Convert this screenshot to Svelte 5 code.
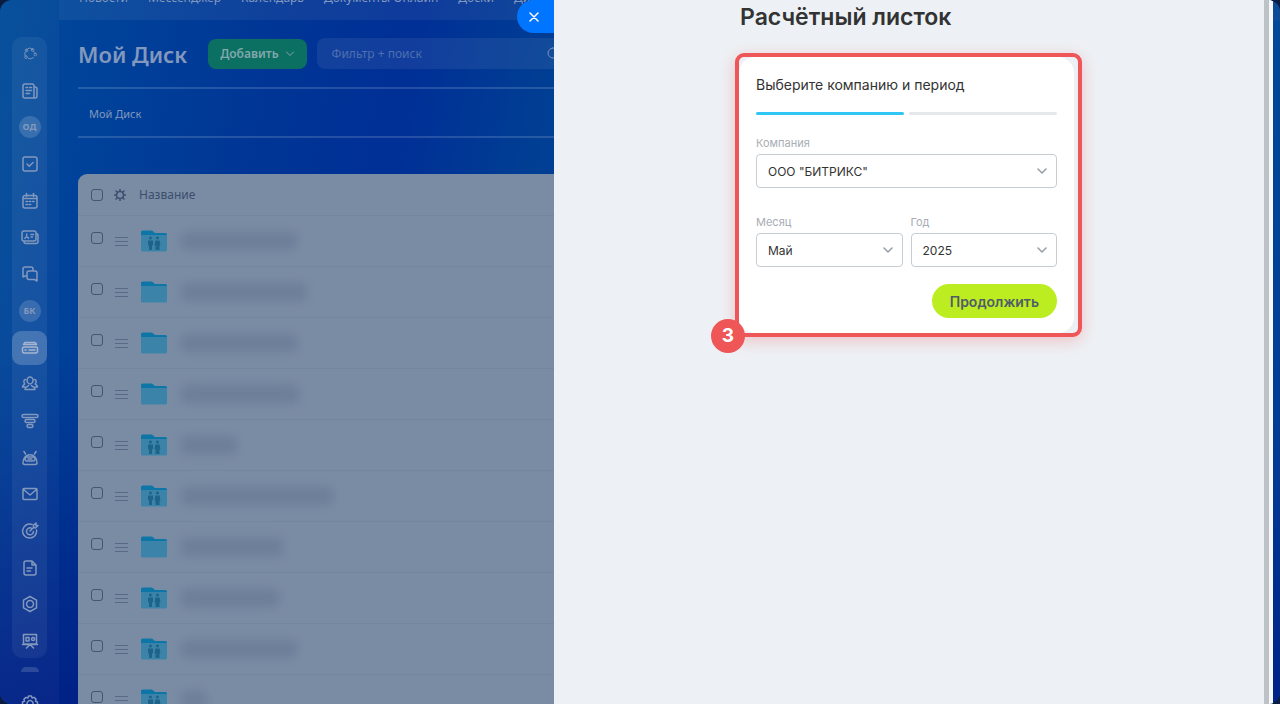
<script>
	let company = 'bitrix';
	let month = 'may';
	let year = '2025';

	const topMenu = ['Новости', 'Мессенджер', 'Календарь', 'Документы Онлайн', 'Доски', 'Диск'];

	const sidebar = [
		{ title: 'Копилот', thin: true, d: 'M5 5a4 4 0 0 1 7-1M13 6.500a4 4 0 0 1 1.500 2M13 13a5 5 0 0 1-6 1M3.500 11a4 4 0 0 1 0-4M5 3.500a1.500 1.500 0 1 0 .1 3a1.500 1.500 0 1 0-.1-3M12 3a1.500 1.500 0 1 0 .1 3a1.500 1.500 0 1 0-.1-3M15 8a1.500 1.500 0 1 0 .1 3a1.500 1.500 0 1 0-.1-3M4.500 11a1.500 1.500 0 1 0 .1 3a1.500 1.500 0 1 0-.1-3' },
		{ title: 'Новости', d: 'M4 2h7a2 2 0 0 1 2 2v12H4a2 2 0 0 1-2-2V4a2 2 0 0 1 2-2M13 5h1a2 2 0 0 1 2 2v7a2 2 0 0 1-2 2h-2M5 5.500h1.500M8.500 5.500h2M5 8.500h5.500M5 11.500h3.500' },
		{ title: 'Общие документы', letters: 'ОД' },
		{ title: 'Задачи', d: 'M4 2h10a2 2 0 0 1 2 2v10a2 2 0 0 1-2 2H4a2 2 0 0 1-2-2V4a2 2 0 0 1 2-2M6 9l2.200 2.200L12 7.500' },
		{ title: 'Календарь', d: 'M4 3.500h10a2 2 0 0 1 2 2V14a2 2 0 0 1-2 2H4a2 2 0 0 1-2-2V5.500a2 2 0 0 1 2-2M5.500 1.500v3M12.500 1.500v3M2 6.500h14M5 9.500h1.500M8.200 9.500h1.500M11.500 9.500H13M5 12.500h1.500M8.200 12.500h1.500' },
		{ title: 'Контакты', d: 'M3 3h10a2 2 0 0 1 2 2v6a2 2 0 0 1-2 2H3a2 2 0 0 1-2-2V5a2 2 0 0 1 2-2M15 5.500a2 2 0 0 1 2 2V13a2 2 0 0 1-2 2.500H5a2 2 0 0 1-2-2M4 10.500c0-2 3.500-2 3.500 0M5.700 6v1.500M10 6.500h2.500M10 9h1.500' },
		{ title: 'Чат', d: 'M6 11H4l-2 1V4a2 2 0 0 1 2-2h6a2 2 0 0 1 2 2v1M8 6h6a2 2 0 0 1 2 2v8l-2.500-1.500H8a2 2 0 0 1-2-2V8a2 2 0 0 1 2-2' },
		{ title: 'База контактов', letters: 'БК' },
		{ title: 'Диск', active: true, d: 'M4 3.500h10l1.500 2h-13zM3 8h12a1.500 1.500 0 0 1 1.500 1.500v3A1.500 1.500 0 0 1 15 14H3a1.500 1.500 0 0 1-1.500-1.500v-3A1.500 1.500 0 0 1 3 8M4 11h1M8 11h6' },
		{ title: 'Группы', d: 'M9 2a3 3.500 0 1 0 .1 0M4 14.500c0-3 3-2.500 3.500-4M14 14.500c0-3-3-2.500-3.500-4M4 14.500h10M4.500 4.500c-2 0-2 3-.8 4.500C3 10 1.500 10 1.500 12H4M13.500 4.500c2 0 2 3 .8 4.500.7 1 2.200 1 2.200 3H14' },
		{ title: 'Воронка', d: 'M2.500 2.500h13a1 1 0 0 1 0 3h-13a1 1 0 0 1 0-3M5.500 7.500h7a1 1 0 0 1 0 3h-7a1 1 0 0 1 0-3M7.500 12.500h3a1 1 0 0 1 0 3h-3a1 1 0 0 1 0-3' },
		{ title: 'Роботы', d: 'M2 14c0-11 14-11 14 0 0 1-1 1.500-2 1.500H4c-1 0-2-.5-2-1.500M4.500 5L3 2.500M13.500 5L15 2.500M6 8h6a2 2 0 0 1 0 4H6a2 2 0 0 1 0-4M7 10h4' },
		{ title: 'Почта', d: 'M3 3.500h12a1 1 0 0 1 1 1v9a1 1 0 0 1-1 1H3a1 1 0 0 1-1-1v-9a1 1 0 0 1 1-1M2.500 4.500L9 10l6.500-5.500' },
		{ title: 'Цели', d: 'M11 2.500A7 7 0 1 0 15.500 8M10 6a3.500 3.500 0 1 0 2.500 3.500M9 9l4-4M12.500 5.500V3L15 1v2.500h2L14.500 6z' },
		{ title: 'Документы', d: 'M5 2h6l4 4v8a2 2 0 0 1-2 2H5a2 2 0 0 1-2-2V4a2 2 0 0 1 2-2M11 2v4h4M6 9h5M6 12h3.500' },
		{ title: 'Маркет', d: 'M9 1.500l6.500 3.700v7.600L9 16.500l-6.500-3.700V5.200zM9 5.500a3.500 3.500 0 1 0 .1 0' },
		{ title: 'Доски', d: 'M2.500 2.500h13v9.500h-13zM1.500 12.500h15M5.500 16L9 12.500l3.500 3.500M5 5.500h3v3.500H5zM12 5.500a1.500 1.500 0 1 0 .1 0' }
	];

	// width of the hidden file name, px
	const files = [
		{ shared: true, width: 116 },
		{ shared: false, width: 126 },
		{ shared: false, width: 116 },
		{ shared: false, width: 118 },
		{ shared: true, width: 56 },
		{ shared: true, width: 152 },
		{ shared: false, width: 102 },
		{ shared: true, width: 98 },
		{ shared: true, width: 116 },
		{ shared: true, width: 26 }
	];
</script>

<div class="app">
	<div class="desk">
		<aside class="sidebar">
			<nav class="side-menu" aria-label="Разделы">
				{#each sidebar as item}
					<a href="#top" class="side-item" class:active={item.active} aria-label={item.title}>
						{#if item.letters}
							<span class="letters">{item.letters}</span>
						{:else}
							<svg class:thin={item.thin} viewBox="0 0 18 18"><path d={item.d} /></svg>
						{/if}
					</a>
				{/each}
			</nav>
			<div class="side-bottom">
				<i class="side-more"></i>
				<svg viewBox="0 0 18 18"><path d="M7.500 2h3l.6 2 2-.6 2 2-.6 2 2 .6v3l-2 .6.6 2-2 2-2-.6-.6 2h-3l-.6-2-2 .6-2-2 .6-2-2-.6V8l2-.6-.6-2 2-2 2 .6zM9 6.500a3 3 0 1 0 .1 0" /></svg>
			</div>
		</aside>

		<main class="content">
			<nav class="top-menu" aria-label="Меню">
				{#each topMenu as name}
					<a href="#top">{name}</a>
				{/each}
			</nav>

			<div class="workarea">
				<div class="toolbar">
					<h1>Мой Диск</h1>
					<button class="add" type="button">
						Добавить
						<svg viewBox="0 0 10 10"><path d="M1.500 3L5 6.500 8.500 3" /></svg>
					</button>
					<div class="search">
						<input type="text" placeholder="Фильтр + поиск" aria-label="Фильтр + поиск" />
						<svg viewBox="0 0 16 16"><path d="M7 2a5 5 0 1 0 .1 0M11 11l4 4" /></svg>
					</div>
				</div>

				<div class="breadcrumbs"><a href="#top">Мой Диск</a></div>

				<table class="grid">
					<thead>
						<tr>
							<th class="col-check"><input type="checkbox" aria-label="Выбрать все" /></th>
							<th class="col-menu">
								<svg class="gear" viewBox="0 0 12 12"><path d="M6 2.500a3.500 3.500 0 1 0 .1 0M6 .5v2M6 9.500v2M.5 6h2M9.500 6h2M2 2l1.500 1.500M8.500 8.500L10 10M10 2L8.500 3.500M3.500 8.500L2 10" /></svg>
							</th>
							<th colspan="2">Название</th>
						</tr>
					</thead>
					<tbody>
						{#each files as file}
							<tr>
								<td class="col-check"><input type="checkbox" aria-label="Выбрать" /></td>
								<td class="col-menu"><i class="burger"></i></td>
								<td class="col-icon">
									<svg class="folder" viewBox="0 0 26 22">
										<path class="back" d="M0 2a1.500 1.500 0 0 1 1.500-1.500H11l3 2.500h10.500A1.500 1.500 0 0 1 26 4.500V10H0z" />
										<path class="front" d="M0 5h26v15a1.500 1.500 0 0 1-1.500 1.500h-23A1.500 1.500 0 0 1 0 20z" />
										{#if file.shared}
											<path class="people" d="M9.500 6.500a1.500 1.500 0 1 1-.1 0M16.500 6.500a1.500 1.500 0 1 1-.1 0M7 10.500h5v4.500l-1 .5V20H8v-4.500l-1-.5zM14.500 10.500h4l1 4.500-1 .5V20h-4v-4.500l-1-.5z" />
										{/if}
									</svg>
								</td>
								<td><div class="hidden-name" style="width: {file.width}px"></div></td>
							</tr>
						{/each}
					</tbody>
				</table>
			</div>
		</main>

		<button class="close" type="button" aria-label="Закрыть">
			<svg viewBox="0 0 10 10"><path d="M1 1l8 8M9 1L1 9" /></svg>
		</button>
	</div>

	<section class="panel">
		<div class="panel-inner">
			<h2>Расчётный листок</h2>
			<form class="card">
				<p class="card-title">Выберите компанию и период</p>
				<div class="steps"><i class="done"></i><i></i></div>

				<div class="field">
					<label for="company">Компания</label>
					<div class="select">
						<select id="company" bind:value={company}>
							<option value="bitrix">ООО "БИТРИКС"</option>
						</select>
						<svg viewBox="0 0 10 10"><path d="M1 3l4 4 4-4" /></svg>
					</div>
				</div>

				<div class="row">
					<div class="field">
						<label for="month">Месяц</label>
						<div class="select">
							<select id="month" bind:value={month}>
								<option value="may">Май</option>
							</select>
							<svg viewBox="0 0 10 10"><path d="M1 3l4 4 4-4" /></svg>
						</div>
					</div>
					<div class="field">
						<label for="year">Год</label>
						<div class="select">
							<select id="year" bind:value={year}>
								<option value="2025">2025</option>
							</select>
							<svg viewBox="0 0 10 10"><path d="M1 3l4 4 4-4" /></svg>
						</div>
					</div>
				</div>

				<button class="submit" type="button">Продолжить</button>

				<div class="mark"><span>3</span></div>
			</form>
		</div>
		<div class="scrollbar"></div>
	</section>
	<div class="edge"></div>
</div>

<style>
	:global(body) {
		background: #0b1c40;
	}

	* {
		box-sizing: border-box;
	}

	a {
		color: inherit;
		text-decoration: none;
	}

	svg {
		flex: none;
		fill: none;
		stroke: currentColor;
		stroke-linecap: round;
		stroke-linejoin: round;
	}

	button {
		border: 0;
		cursor: pointer;
		font-family: inherit;
	}

	.app {
		display: grid;
		grid-template-columns: minmax(0, 554fr) minmax(0, 719fr) 7px;
		height: 100vh;
		overflow: hidden;
		border-radius: 12px;
		font-family: "Noto Sans", "Open Sans", sans-serif;
		background: #003594;
	}

	/* page under the slider */
	.desk {
		position: relative;
		display: flex;
		min-height: 0;
		overflow: hidden;
		color: #8398bd;
		background:
			linear-gradient(180deg, rgba(0, 24, 128, 0) 50%, rgba(0, 24, 128, 0.75) 100%),
			linear-gradient(100deg, #004c98 0%, #00439a 14%, #003595 42%, #002f96 62%, #003f93 84%, #003c92 100%);
	}

	.sidebar {
		display: flex;
		flex-direction: column;
		flex: none;
		width: 59px;
		height: 100vh;
		padding: 37px 12px 0;
		background: rgba(255, 255, 255, 0.03);
	}

	.side-menu {
		display: flex;
		flex: 1;
		flex-direction: column;
		justify-content: space-between;
		border-radius: 10px;
		background: rgba(255, 255, 255, 0.06);
	}

	.side-item {
		display: flex;
		align-items: center;
		justify-content: center;
		height: 34px;
		border-radius: 9px;
	}

	.side-item svg,
	.side-bottom svg {
		width: 18px;
		height: 18px;
		stroke-width: 1.5;
	}

	.side-item svg.thin {
		width: 16px;
		height: 16px;
		stroke-width: 1;
	}

	.side-item.active {
		color: #a5b5d0;
		background: rgba(255, 255, 255, 0.2);
	}

	.letters {
		width: 22px;
		border-radius: 50%;
		font-size: 9px;
		font-weight: 700;
		line-height: 22px;
		text-align: center;
		background: rgba(255, 255, 255, 0.15);
	}

	.side-bottom {
		display: flex;
		flex-direction: column;
		align-items: center;
		gap: 22px;
		height: 46px;
		padding-top: 9px;
	}

	.side-more {
		flex: none;
		width: 18px;
		height: 5px;
		border-radius: 9px 9px 0 0;
		background: rgba(255, 255, 255, 0.15);
	}

	.content {
		flex: 1;
		min-width: 0;
	}

	.top-menu {
		display: flex;
		align-items: flex-end;
		gap: 20px;
		height: 20px;
		padding: 0 20px 14px;
		overflow: hidden;
		font-size: 12px;
		line-height: 16px;
		white-space: nowrap;
		background: rgba(255, 255, 255, 0.06);
	}

	.workarea {
		padding-left: 19px;
	}

	.toolbar {
		display: flex;
		align-items: center;
		height: 69px;
		border-bottom: 2px solid rgba(255, 255, 255, 0.15);
	}

	h1 {
		margin: 0 21px 0 0;
		font-size: 22px;
		font-weight: 600;
		line-height: 30px;
		white-space: nowrap;
	}

	.add {
		display: flex;
		flex: none;
		align-items: center;
		gap: 6px;
		height: 30px;
		padding: 0 12px;
		border-radius: 8px;
		color: #82a8ac;
		font-size: 12px;
		font-weight: 600;
		background: #0b6f62;
	}

	.add svg {
		width: 10px;
		height: 10px;
	}

	.search {
		display: flex;
		flex: 1;
		align-items: center;
		min-width: 0;
		height: 31px;
		margin-left: 10px;
		margin-right: -8px;
		border-radius: 8px 0 0 8px;
		background: rgba(255, 255, 255, 0.07);
	}

	.search input {
		flex: 1;
		min-width: 0;
		padding: 0 15px;
		border: 0;
		outline: 0;
		color: #8398bd;
		font: 12px "Noto Sans", sans-serif;
		background: none;
	}

	.search input::placeholder {
		color: #4e70ae;
	}

	.search svg {
		width: 16px;
		height: 16px;
	}

	.breadcrumbs {
		height: 49px;
		padding-left: 11px;
		border-bottom: 2px solid rgba(255, 255, 255, 0.15);
		font-size: 11px;
		line-height: 49px;
	}

	.grid {
		width: 100%;
		margin-top: 36px;
		border-collapse: separate;
		border-spacing: 0;
		border-radius: 9px 0 0 0;
		color: #3a4e6d;
		background: #7a8ca4;
	}

	th,
	td {
		padding: 0;
		border-bottom: 1px solid #74869e;
		text-align: left;
	}

	th {
		height: 42px;
		font-size: 12px;
		font-weight: 400;
	}

	td {
		height: 51px;
	}

	.col-check {
		width: 34px;
		padding-left: 13px;
	}

	.col-menu {
		width: 27px;
		padding-left: 2px;
	}

	.col-icon {
		width: 42px;
		padding-left: 2px;
	}

	.grid input {
		display: block;
		width: 12px;
		height: 12px;
		margin: 0;
		appearance: none;
		border: 1px solid #44566f;
		border-radius: 3px;
	}

	td.col-check {
		padding-bottom: 6px;
	}

	.gear {
		display: block;
		width: 12px;
		height: 12px;
		stroke-width: 1.5;
	}

	.burger {
		display: block;
		width: 13px;
		height: 9px;
		margin-left: 1px;
		border-top: 1px solid #566a87;
		border-bottom: 1px solid #566a87;
		background: linear-gradient(#566a87, #566a87) center / 100% 1px no-repeat;
	}

	.folder {
		display: block;
		width: 26px;
		height: 22px;
		stroke: none;
	}

	.back {
		fill: #0e76a6;
	}

	.front {
		fill: #3c83a9;
	}

	.people {
		fill: #1e6488;
	}

	.hidden-name {
		height: 18px;
		border-radius: 6px;
		background: rgba(90, 108, 138, 0.4);
		filter: blur(5px);
	}

	.close {
		position: absolute;
		top: 0;
		right: 0;
		display: flex;
		align-items: center;
		width: 37px;
		height: 33px;
		padding: 0 0 0 12px;
		border-radius: 17px 0 0 17px;
		color: #fff;
		background: #0075ff;
	}

	.close svg {
		width: 10px;
		height: 10px;
		stroke-width: 1.5;
	}

	/* slider */
	.panel {
		display: flex;
		font-family: Inter, "Liberation Sans", sans-serif;
		color: #333;
		background: #edf1f5;
	}

	.panel-inner {
		flex: 1;
		padding: 2px 190px 0 185px;
	}

	.scrollbar {
		width: 9px;
		border-right: 4px solid #f5f7f9;
		background: #bcc2c5;
	}

	.edge {
		background: linear-gradient(180deg, #0d4b96 0, #0d4b96 20px, #004898 21px, #003d95 60%, #002388 100%);
	}

	h2 {
		margin: 0 0 25px 1px;
		font-size: 23px;
		font-weight: 600;
		line-height: 30px;
		white-space: nowrap;
	}

	.card {
		position: relative;
		padding: 18px 17px 15px;
		border-radius: 16px;
		background: #fff;
	}

	.card-title {
		margin: 0;
		font-size: 14px;
		line-height: 20px;
	}

	.steps {
		display: flex;
		gap: 5px;
		margin: 17px 0 20px;
	}

	.steps i {
		flex: 1;
		height: 3px;
		border-radius: 2px;
		background: #e6e7e9;
	}

	.steps .done {
		background: #2fc6f6;
	}

	.row {
		display: flex;
		gap: 8px;
		margin: 26px 0 17px;
	}

	.row .field {
		flex: 1;
	}

	label {
		display: block;
		margin-bottom: 3px;
		color: #a8adb4;
		font-size: 11px;
		line-height: 16px;
	}

	.select {
		display: grid;
		align-items: center;
	}

	.select select,
	.select svg {
		grid-area: 1 / 1;
	}

	.select svg {
		justify-self: end;
		width: 10px;
		height: 10px;
		margin-right: 10px;
		color: #959ca4;
		stroke-width: 1.5;
		pointer-events: none;
	}

	select {
		width: 100%;
		height: 34px;
		padding: 0 11px;
		appearance: none;
		border: 1px solid #c6cdd3;
		border-radius: 4px;
		color: #333;
		font: 12px Inter, "Liberation Sans", sans-serif;
		background: #fff;
	}

	.submit {
		display: block;
		height: 34px;
		margin-left: auto;
		padding: 0 18px;
		border-radius: 17px;
		color: #525c69;
		font-size: 14px;
		font-weight: 600;
		background: #bbed21;
	}

	/* numbered callout around the form */
	.mark {
		position: absolute;
		inset: -4px -8px -4px -4px;
		border: 4px solid #ee5658;
		border-radius: 9px;
		box-shadow: 0 4px 16px rgba(238, 86, 88, 0.3);
		pointer-events: none;
	}

	.mark span {
		position: absolute;
		left: -28px;
		bottom: -20px;
		width: 34px;
		border-radius: 50%;
		color: #fff;
		font-size: 19px;
		font-weight: 700;
		line-height: 34px;
		text-align: center;
		background: #ee5658;
	}
</style>
